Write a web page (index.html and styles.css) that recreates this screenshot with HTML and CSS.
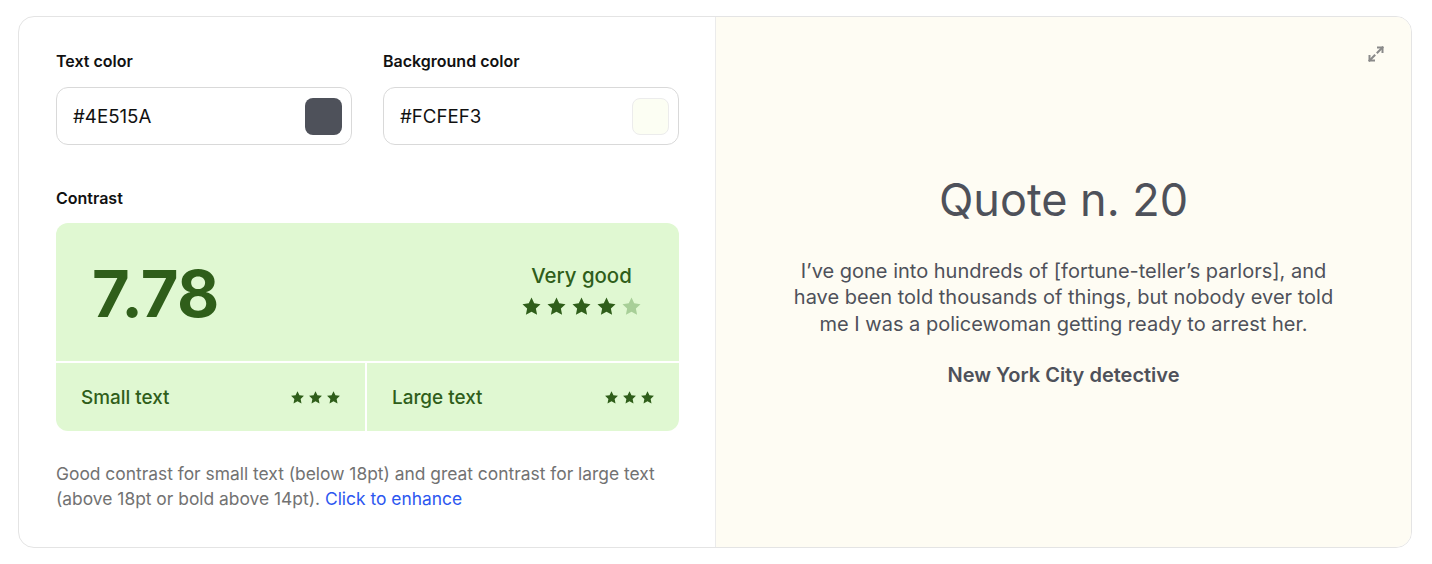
FILE: index.html
```html
<!DOCTYPE html>
<html lang="en">
<head>
<meta charset="utf-8">
<link rel="stylesheet" href="styles.css">
<title>Contrast checker</title>
</head>
<body>
<svg width="0" height="0" class="defs">
  <defs>
    <symbol id="star" viewBox="0 0 24 24">
      <path d="M12 1.8l3.1 6.6 7.2.9-5.3 5 1.4 7.1L12 17.9l-6.4 3.5 1.4-7.1-5.3-5 7.2-.9z"/>
    </symbol>
  </defs>
</svg>
<main class="card">
  <section class="controls">
    <div class="fields">
      <div class="field">
        <label class="label">Text color</label>
        <div class="input">
          <span class="value">#4E515A</span>
          <span class="swatch swatch-dark"></span>
        </div>
      </div>
      <div class="field">
        <label class="label">Background color</label>
        <div class="input">
          <span class="value">#FCFEF3</span>
          <span class="swatch swatch-light"></span>
        </div>
      </div>
    </div>

    <div class="label contrast-label">Contrast</div>
    <div class="score">
      <div class="score-main">
        <div class="ratio">7.78</div>
        <div class="rating">
          <div class="rating-text">Very good</div>
          <div class="stars stars-big">
            <svg><use href="#star"/></svg>
            <svg><use href="#star"/></svg>
            <svg><use href="#star"/></svg>
            <svg><use href="#star"/></svg>
            <svg class="off"><use href="#star"/></svg>
          </div>
        </div>
      </div>
      <div class="score-cell">
        <span>Small text</span>
        <div class="stars stars-small">
          <svg><use href="#star"/></svg>
          <svg><use href="#star"/></svg>
          <svg><use href="#star"/></svg>
        </div>
      </div>
      <div class="score-cell">
        <span>Large text</span>
        <div class="stars stars-small">
          <svg><use href="#star"/></svg>
          <svg><use href="#star"/></svg>
          <svg><use href="#star"/></svg>
        </div>
      </div>
    </div>

    <p class="note">Good contrast for small text (below 18pt) and great contrast for large text (above 18pt or bold above 14pt). <a href="#" class="link">Click to enhance</a></p>
  </section>

  <section class="preview">
    <button class="expand" aria-label="Expand">
      <svg viewBox="0 0 20 20" width="20" height="20" fill="none" stroke="#8a8a8a" stroke-width="2" stroke-linecap="square">
        <path d="M11.5 8.5L16.5 3.5"/>
        <path d="M12 3.5h4.5v4.5"/>
        <path d="M8.5 11.5L3.5 16.5"/>
        <path d="M3.5 12v4.5h4.5"/>
      </svg>
    </button>
    <div class="quote">
      <h1 class="quote-title">Quote n. 20</h1>
      <p class="quote-text">I’ve gone into hundreds of [fortune-teller’s parlors], and have been told thousands of things, but nobody ever told me I was a policewoman getting ready to arrest her.</p>
      <p class="quote-author">New York City detective</p>
    </div>
  </section>
</main>
</body>
</html>
```

FILE: styles.css
```css
* { box-sizing: border-box; }

html, body {
  margin: 0;
  background: #ffffff;
}

body {
  padding: 16px 20px 0 18px;
  font-family: Inter, "Noto Sans", sans-serif;
  color: #111;
}

.defs { position: absolute; }

.card {
  display: grid;
  grid-template-columns: 697px 1fr;
  width: 1394px;
  height: 532px;
  border: 1px solid #e4e4e4;
  border-radius: 16px;
  overflow: hidden;
  background: #fff;
}

.controls {
  padding: 34px 36px 0 37px;
  border-right: 1px solid #ebebeb;
}

.fields {
  display: grid;
  grid-template-columns: 1fr 1fr;
  gap: 31px;
}

.label {
  display: block;
  font-size: 16px;
  line-height: 20px;
  font-weight: 600;
  color: #111;
}

.input {
  margin-top: 16px;
  height: 58px;
  border: 1px solid #d9d9d9;
  border-radius: 12px;
  display: flex;
  align-items: center;
  justify-content: space-between;
  padding: 0 9px 0 16px;
  background: #fff;
}

.value {
  font-size: 18.7px;
  color: #111;
}

.swatch {
  width: 37px;
  height: 37px;
  border-radius: 8px;
}
.swatch-dark { background: #4E515A; }
.swatch-light { background: #FCFEF3; border: 1px solid #ececec; }

.contrast-label { margin-top: 43px; }

.score {
  margin-top: 15px;
  display: grid;
  grid-template-columns: 309px 1fr;
  grid-template-rows: 138px 68px;
  gap: 2px;
  border-radius: 12px;
  overflow: hidden;
  background: #fff;
}

.score-main {
  grid-column: 1 / -1;
  background: #e0f8d2;
  display: flex;
  align-items: center;
  justify-content: space-between;
  padding: 0 37px 0 36px;
  color: #2f5e1a;
}

.ratio {
  font-size: 65px;
  font-weight: 700;
  letter-spacing: -0.5px;
  line-height: 1;
  margin-top: 2px;
}

.rating {
  display: flex;
  flex-direction: column;
  align-items: center;
  gap: 8px;
  margin-top: -4px;
}

.rating-text {
  font-size: 20.4px;
  font-weight: 500;
  line-height: 24px;
}

.stars {
  display: flex;
  fill: #2f5e1a;
}
.stars svg { display: block; }
.stars .off { fill: #a8cf98; }

.stars-big { gap: 4px; }
.stars-big svg { width: 21px; height: 21px; }

.stars-small { gap: 3px; }
.stars-small svg { width: 15px; height: 15px; }

.score-cell {
  background: #e0f8d2;
  display: flex;
  align-items: center;
  justify-content: space-between;
  padding: 0 24px 0 25px;
  font-size: 18.9px;
  font-weight: 500;
  color: #2f5e1a;
}

.note {
  margin: 30px 0 0;
  font-size: 17.4px;
  line-height: 25px;
  color: #727272;
}

.link {
  color: #2c57f0;
  text-decoration: none;
}

.preview {
  position: relative;
  background: #fefcf3;
  display: flex;
  align-items: center;
  justify-content: center;
  padding-bottom: 4px;
}

.expand {
  position: absolute;
  top: 27px;
  right: 25px;
  padding: 0;
  border: 0;
  background: none;
  width: 20px;
  height: 20px;
}
.expand svg { display: block; }

.quote {
  width: 560px;
  text-align: center;
  color: #4E515A;
}

.quote-title {
  margin: 0;
  font-size: 45px;
  font-weight: 400;
  line-height: 54px;
}

.quote-text {
  margin: 31px 0 0;
  font-size: 20px;
  line-height: 26.5px;
}

.quote-author {
  margin: 24.5px 0 0;
  font-size: 20px;
  font-weight: 600;
  line-height: 26px;
}
```
